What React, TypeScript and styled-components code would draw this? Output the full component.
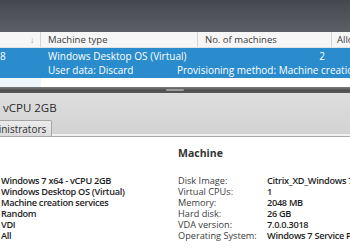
import React from "react";
import styled, { createGlobalStyle } from "styled-components";

const Global = createGlobalStyle`
  html, body { margin: 0; padding: 0; background: #fff; }
  body { width: 350px; height: 250px; overflow: hidden; font-family: "Open Sans", "Noto Sans", sans-serif; }
`;

const Page = styled.div`
  width: 350px;
  height: 250px;
  overflow: hidden;
  display: flex;
  flex-direction: column;
  background: #fff;
`;

const TopBar = styled.div`
  height: 32px;
  flex: none;
  background: linear-gradient(#45484f, #5c5f65);
`;

const HeaderRow = styled.div`
  height: 16px;
  flex: none;
  display: grid;
  grid-template-columns: 41px 157px 134px 1fr;
  background: #f6f6f6;
  border-bottom: 1px solid #e2e2e2;
  box-sizing: border-box;
`;

const HeaderCell = styled.div<{ $last?: boolean; $pad?: number }>`
  display: flex;
  align-items: center;
  justify-content: ${(p) => (p.$last ? "flex-end" : "flex-start")};
  padding: 0 ${(p) => (p.$last ? "6px" : "0")} 0 ${(p) => (p.$last ? 0 : p.$pad ?? 7)}px;
  border-right: 1px solid #d4d4d4;
  font-size: 9.5px;
  color: #3a3a3a;
  white-space: nowrap;
  overflow: hidden;
  &:last-child { border-right: none; }
`;

const SortArrow = styled.span`
  font-size: 8px;
  color: #8a8a8a;
`;

const SelectedRow = styled.div`
  height: 30px;
  flex: none;
  background: #2a8ccd;
  display: flex;
  flex-direction: column;
  justify-content: center;
  color: #fff;
  font-size: 10px;
  line-height: 14px;
`;

const RowLine = styled.div`
  display: grid;
  grid-template-columns: 41px 157px 134px 1fr;
  white-space: nowrap;
`;

const DetailLine = styled.div`
  display: grid;
  grid-template-columns: 129px 1fr;
  white-space: nowrap;
  padding-left: 48px;
  overflow: hidden;
`;

const Cell = styled.div<{ $right?: boolean; $pad?: number }>`
  padding-left: ${(p) => p.$pad ?? 7}px;
  padding-right: ${(p) => (p.$right ? "7px" : "0")};
  text-align: ${(p) => (p.$right ? "right" : "left")};
  overflow: hidden;
`;

const Gap = styled.div`
  height: 9px;
  flex: none;
  display: grid;
  grid-template-columns: 41px 1fr;
`;

const Tint = styled.div`
  background: #eef6fc;
`;

const Splitter = styled.div`
  height: 6px;
  flex: none;
  background: linear-gradient(#7a7a7a, #4e4e4e 60%, #5a5a5a);
  display: flex;
  align-items: center;
  justify-content: center;
`;

const Grip = styled.div`
  width: 18px;
  height: 2px;
  background: #9a9a9a;
  border-radius: 1px;
`;

const Panel = styled.div`
  height: 44px;
  flex: none;
  background: linear-gradient(#dedede, #d2d2d2);
  display: flex;
  flex-direction: column;
  border-bottom: 1px solid #a8a8a8;
  box-shadow: inset 0 -2px 0 #f2f2f2;
  box-sizing: border-box;
`;

const PanelTitle = styled.div`
  height: 27px;
  display: flex;
  align-items: center;
  padding-left: 3px;
  padding-top: 1px;
  box-sizing: border-box;
  font-size: 11.5px;
  color: #2a2a2a;
  white-space: nowrap;
`;

const TabStrip = styled.div`
  display: flex;
  margin-left: -30px;
`;

const Tab = styled.div`
  height: 15px;
  padding: 0 5px 0 6px;
  display: flex;
  align-items: center;
  background: linear-gradient(#ececec, #dcdcdc);
  border: 1px solid #a6a6a6;
  border-bottom: none;
  border-radius: 2px 2px 0 0;
  font-size: 10px;
  color: #2e2e2e;
  white-space: nowrap;
`;

const Details = styled.div`
  display: grid;
  grid-template-columns: 177px 1fr;
  padding-top: 9px;
`;

const LeftCol = styled.div`
  display: flex;
  flex-direction: column;
  padding-top: 29px;
  padding-left: 1px;
`;

const RightCol = styled.div`
  display: flex;
  flex-direction: column;
`;

const SectionTitle = styled.div`
  font-size: 10.5px;
  font-weight: 700;
  color: #333;
  height: 29px;
  line-height: 14px;
  padding-left: 1px;
`;

const Pair = styled.div`
  display: grid;
  grid-template-columns: 89px 1fr;
  padding-left: 1px;
`;

const Label = styled.div`
  font-size: 9.2px;
  line-height: 11px;
  height: 11px;
  color: #3c3c3c;
  white-space: nowrap;
`;

const Value = styled.div`
  font-size: 9.2px;
  line-height: 11px;
  height: 11px;
  font-weight: 600;
  letter-spacing: -0.3px;
  color: #1e1e1e;
  white-space: nowrap;
  overflow: hidden;
`;

const leftValues = [
  "Windows 7 x64 - vCPU 2GB",
  "Windows Desktop OS (Virtual)",
  "Machine creation services",
  "Random",
  "VDI",
  "All",
];

const machine: [string, string][] = [
  ["Disk Image:", "Citrix_XD_Windows 7 x64"],
  ["Virtual CPUs:", "1"],
  ["Memory:", "2048 MB"],
  ["Hard disk:", "26 GB"],
  ["VDA version:", "7.0.0.3018"],
  ["Operating System:", "Windows 7 Service Pack 1"],
];

export default function App() {
  return (
    <Page>
      <Global />
      <TopBar />
      <HeaderRow>
        <HeaderCell $last>
          <SortArrow>↓</SortArrow>
        </HeaderCell>
        <HeaderCell>Machine type</HeaderCell>
        <HeaderCell>No. of machines</HeaderCell>
        <HeaderCell $pad={5}>Allocation type</HeaderCell>
      </HeaderRow>
      <SelectedRow>
        <RowLine>
          <Cell $pad={0}>8</Cell>
          <Cell>Windows Desktop OS (Virtual)</Cell>
          <Cell $right>2</Cell>
          <Cell />
        </RowLine>
        <DetailLine>
          <span>User data: Discard</span>
          <span>Provisioning method: Machine creation services</span>
        </DetailLine>
      </SelectedRow>
      <Gap>
        <Tint />
        <div />
      </Gap>
      <Splitter>
        <Grip />
      </Splitter>
      <Panel>
        <PanelTitle>vCPU 2GB</PanelTitle>
        <TabStrip>
          <Tab>Administrators</Tab>
        </TabStrip>
      </Panel>
      <Details>
        <LeftCol>
          {leftValues.map((v) => (
            <Value key={v}>{v}</Value>
          ))}
        </LeftCol>
        <RightCol>
          <SectionTitle>Machine</SectionTitle>
          {machine.map(([l, v]) => (
            <Pair key={l}>
              <Label>{l}</Label>
              <Value>{v}</Value>
            </Pair>
          ))}
        </RightCol>
      </Details>
    </Page>
  );
}
